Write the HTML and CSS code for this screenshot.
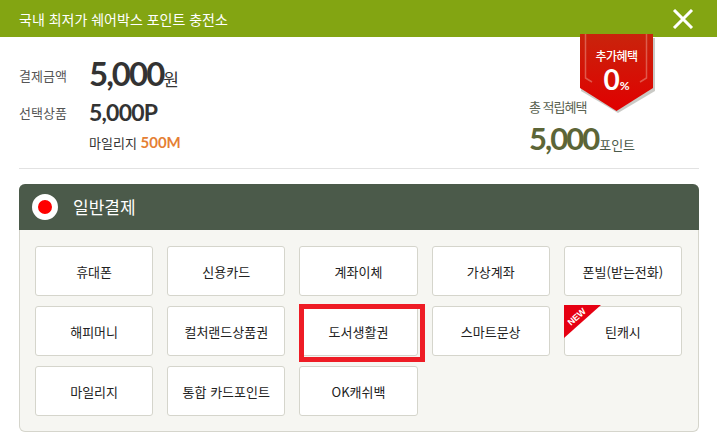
FILE: index.html
```html
<!DOCTYPE html>
<html lang="ko">
<head>
  <meta charset="UTF-8">
  <title>포인트 충전소</title>
  <link rel="stylesheet" href="styles.css">
</head>
<body>
  <div class="topbar">
    <div class="title">국내 최저가 쉐어박스 포인트 충전소</div>
    <svg class="close" width="22" height="20" viewBox="0 0 22 20"><path d="M2 1 L20 19 M20 1 L2 19" stroke="#fff" stroke-width="3" fill="none"/></svg>
  </div>

  <div class="summary">
    <div class="amounts">
      <div class="row row-pay">
        <span class="label">결제금액</span>
        <span class="big">5,000</span><span class="unit">원</span>
      </div>
      <div class="row row-item">
        <span class="label">선택상품</span>
        <span class="mid">5,000P</span>
      </div>
      <div class="mileage">마일리지 <b>500M</b></div>
    </div>
    <div class="total">
      <div class="total-label">총 적립혜택</div>
      <div class="total-value"><span class="big olive">5,000</span><span class="total-unit">포인트</span></div>
    </div>
  </div>

  <div class="ribbon">
    <svg width="76" height="80" viewBox="0 0 76 80">
      <defs>
        <linearGradient id="rib" x1="0" y1="0" x2="0" y2="1">
          <stop offset="0" stop-color="#c9240c"/>
          <stop offset="1" stop-color="#e00000"/>
        </linearGradient>
      </defs>
      <path d="M3 4 L75 4 L75 57 L38 79 L1 57 Z" fill="#8a8a80" opacity="0.45"/>
      <path d="M0 0 L73 0 L73 54 L36.500 77 L0 54 Z" fill="url(#rib)"/>
      <path d="M5.500 0 L5.500 44 L12 48 M66.500 0 L66.500 44 L60 48" stroke="#e8877a" stroke-width="1.500" fill="none" opacity="0.6"/>
    </svg>
    <div class="ribbon-text">
      <div class="ribbon-label">추가혜택</div>
      <div class="ribbon-num">0<small>%</small></div>
    </div>
  </div>

  <div class="panel">
    <div class="panel-head">
      <span class="dot"></span>
      <span class="panel-title">일반결제</span>
    </div>
    <div class="panel-body">
      <div class="pay-btn">휴대폰</div>
      <div class="pay-btn">신용카드</div>
      <div class="pay-btn">계좌이체</div>
      <div class="pay-btn">가상계좌</div>
      <div class="pay-btn">폰빌(받는전화)</div>
      <div class="pay-btn">해피머니</div>
      <div class="pay-btn">컬처랜드상품권</div>
      <div class="pay-btn selected">도서생활권</div>
      <div class="pay-btn">스마트문상</div>
      <div class="pay-btn">
        <svg class="new" width="38" height="34" viewBox="0 0 38 34"><path d="M0 0 L37 0 L0 33 Z" fill="#e60012"/><text x="7" y="21" transform="rotate(-42 7 21)" class="new-text">NEW</text></svg>
        틴캐시
      </div>
      <div class="pay-btn">마일리지</div>
      <div class="pay-btn">통합 카드포인트</div>
      <div class="pay-btn">OK캐쉬백</div>
    </div>
  </div>
</body>
</html>
```

FILE: styles.css
```css
body {
  margin: 0;
  height: 442px;
  overflow: hidden;
  position: relative;
  background: #fff;
  font-family: "Noto Sans CJK KR", "Noto Sans", sans-serif;
  color: #333;
}

.topbar {
  height: 37px;
  background: #83a512;
  display: flex;
  justify-content: space-between;
  align-items: center;
  padding: 0 23px 0 19px;
}
.title { color: #fff; font-size: 14px; }
.close { display: block; }

.summary {
  margin: 0 18px 0 19px;
  height: 131px;
  border-bottom: 1px solid #e2e2e2;
  display: flex;
  justify-content: space-between;
}
.amounts { padding-top: 16px; }
.row { display: flex; align-items: baseline; }
.row-item { margin-top: 4px; }
.label { width: 70px; font-size: 13px; color: #555; align-self: center; }
.row-pay .label { margin-top: 4px; }
.big {
  font-family: Lato, sans-serif;
  font-size: 33px;
  font-weight: 700;
  line-height: 40px;
  letter-spacing: -2px;
  color: #333;
}
.unit { font-size: 17px; color: #333; }
.mid {
  font-family: Lato, sans-serif;
  font-size: 23px;
  font-weight: 700;
  line-height: 30px;
  letter-spacing: -0.8px;
}
.mileage { margin: 6px 0 0 70px; font-size: 13px; }
.mileage b { font-family: Lato, sans-serif; font-size: 15px; color: #e57f35; }

.total { width: 170px; padding-top: 60px; }
.total-label { font-size: 13px; color: #5a6250; line-height: 20px; letter-spacing: -1px; }
.total-value { display: flex; align-items: baseline; margin-top: 1px; }
.total-value .big { font-size: 31px; }
.total-value .olive { color: #5c6537; }
.total-unit { margin-left: 1px; font-size: 13px; color: #4b5a4a; }

.ribbon { position: absolute; left: 580px; top: 34px; width: 76px; height: 80px; }
.ribbon svg { display: block; }
.ribbon-text { position: absolute; left: 0; top: 14px; width: 73px; text-align: center; color: #fff; }
.ribbon-label { font-size: 12px; line-height: 16px; font-weight: 500; letter-spacing: -0.5px; }
.ribbon-num { font-family: Lato, sans-serif; font-size: 28px; font-weight: 700; line-height: 30px; }
.ribbon-num small { font-size: 12px; }

.panel {
  margin: 15px 18px 0 19px;
  border-radius: 6px;
  background: #f6f6f2;
  border: 1px solid #d5d5cc;
  border-top: 0;
}
.panel-head {
  height: 46px;
  background: #4b5a4a;
  border-radius: 6px 6px 0 0;
  margin: 0 -1px;
  display: flex;
  align-items: center;
  padding-left: 13px;
}
.dot {
  width: 14px;
  height: 14px;
  border: 6px solid #fff;
  border-radius: 50%;
  background: #f00;
}
.panel-title { margin: 0 0 2px 15px; color: #fff; font-size: 17px; }

.panel-body {
  display: grid;
  grid-template-columns: repeat(5, 1fr);
  grid-auto-rows: 50px;
  column-gap: 14px;
  row-gap: 10px;
  padding: 16px 16px 15px 15px;
}
.pay-btn {
  position: relative;
  background: #fff;
  border: 1px solid #d5d5cc;
  border-radius: 3px;
  display: flex;
  align-items: center;
  justify-content: center;
  font-size: 13px;
  color: #222;
}
.selected::after {
  content: "";
  position: absolute;
  left: -1px;
  top: -3px;
  width: 116px;
  height: 48px;
  border: 5px solid #ee1c25;
}
.new { position: absolute; left: -1px; top: -2px; overflow: visible; }
.new-text { font-family: "Liberation Sans", sans-serif; font-size: 9px; font-weight: 700; fill: #fff; }
```
